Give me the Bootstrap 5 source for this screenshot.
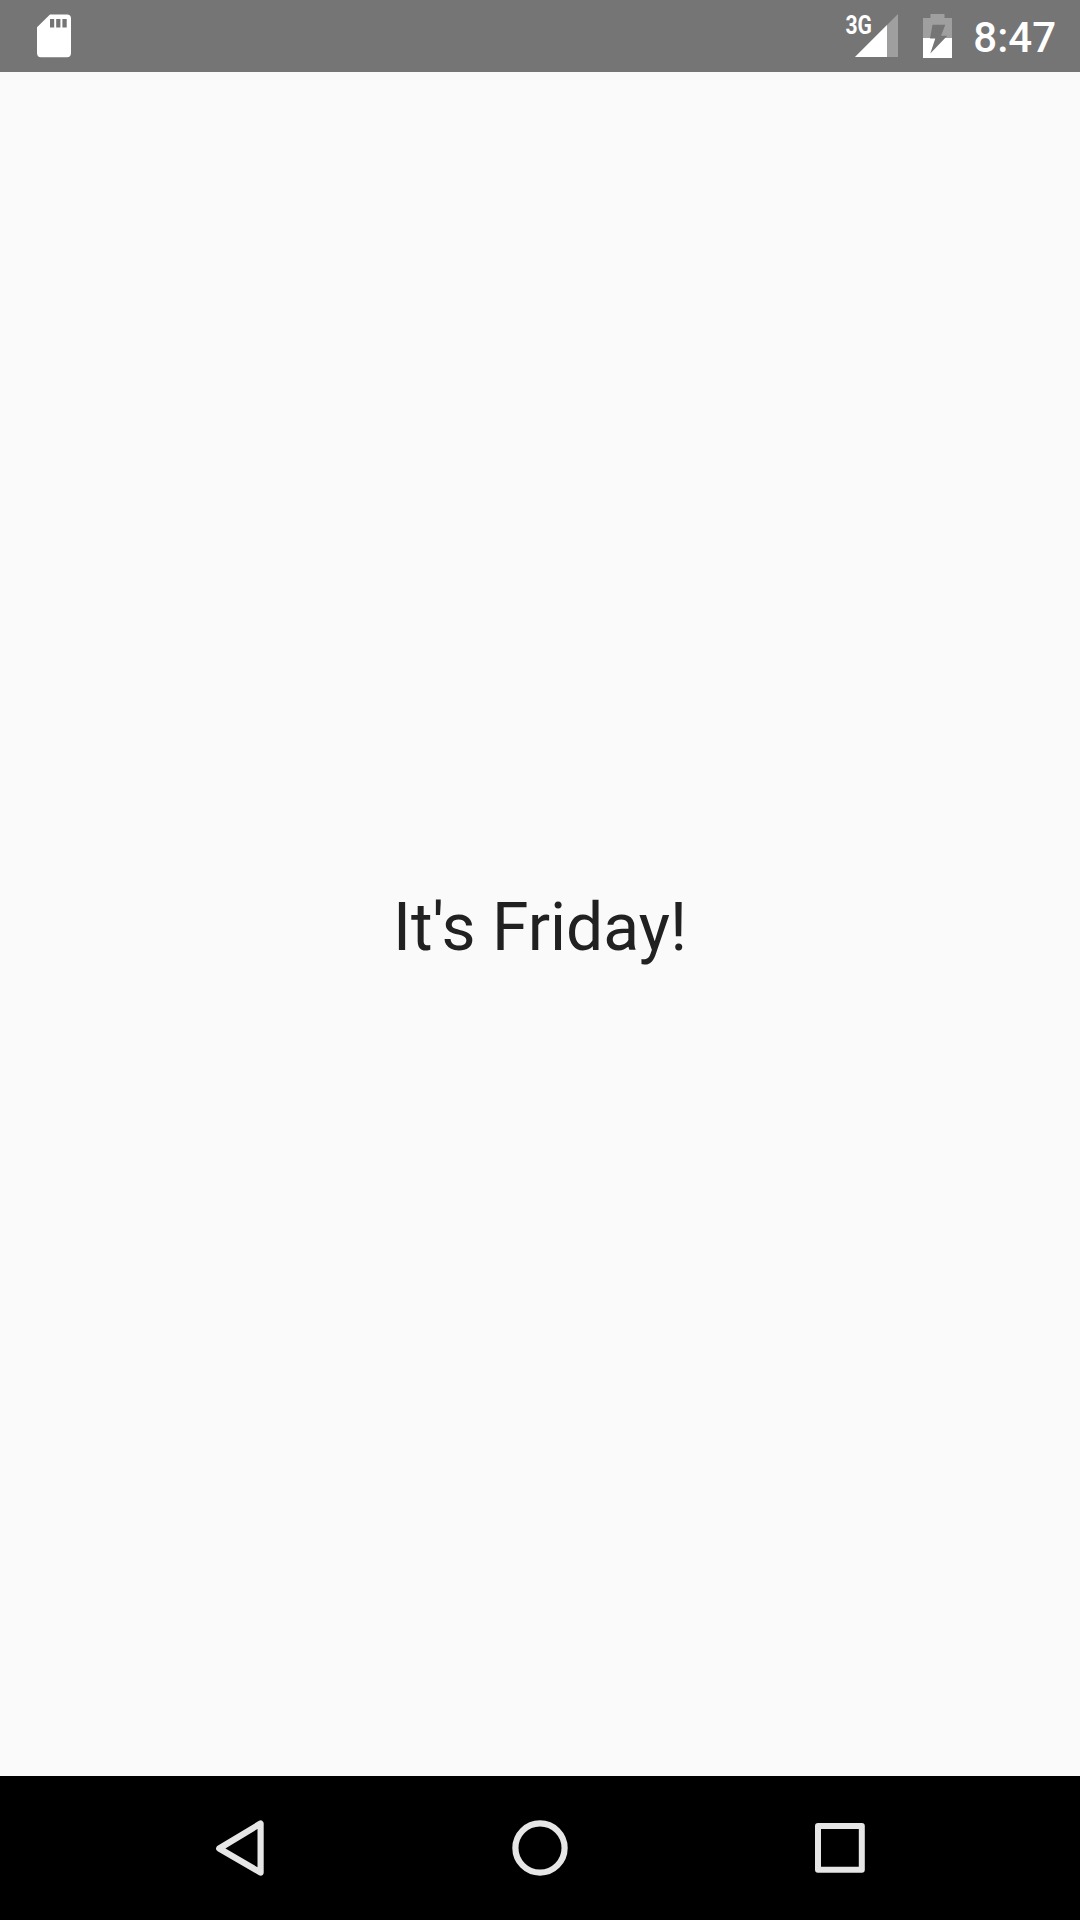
<!DOCTYPE html>
<html lang="en">
<head>
<meta charset="utf-8">
<meta name="viewport" content="width=device-width, initial-scale=1">
<title>It's Friday!</title>
<link href="https://cdn.jsdelivr.net/npm/bootstrap@5.3.0/dist/css/bootstrap.min.css" rel="stylesheet">
<style>
  body { font-family: Roboto, sans-serif; background: #fafafa; color: #212121; }
  .status-bar { height: 72px; background: #757575; color: #fff; padding: 0 24px 0 30px; }
  .status-bar svg, .system-nav svg { display: block; }
  .clock { font-size: 42px; font-weight: 500; line-height: 68px; padding-top: 4px; margin-left: 15px; }
  .greeting { font-size: 66px; line-height: 77px; padding-top: 7px; }
  .system-nav { height: 144px; background: #000; }
  .nav-slot { width: 300px; }
  .net-label { font: 700 26px Roboto, sans-serif; }
</style>
</head>
<body class="vh-100 d-flex flex-column overflow-hidden">
  <header class="status-bar d-flex align-items-center justify-content-between flex-shrink-0">
    <svg width="48" height="72" viewBox="30 0 48 72" aria-label="SD card">
      <path fill="#fff" fill-rule="evenodd" d="M50 14.5H67Q71 14.5 71 18.500V53Q71 57.200 67 57.200H41Q37 57.200 37 53V27.300ZM50 19V27.500H54.200V19ZM56.200 19V27.500H60.400V19ZM62.400 19V27.500H66.700V19Z"/>
    </svg>
    <div class="d-flex align-items-center">
      <svg width="60" height="72" viewBox="842 0 60 72" aria-label="3G signal">
        <path fill="#9f9f9f" d="M898 14V57H855Z"/>
        <path fill="#fff" d="M887 25V57H855Z"/>
        <text class="net-label" x="845.500" y="33.500" fill="#fff" textLength="26.500" lengthAdjust="spacingAndGlyphs">3G</text>
      </svg>
      <svg width="56" height="72" viewBox="902 0 56 72" aria-label="Battery charging">
        <path fill="#9f9f9f" d="M930.500 14H944.500V18H952V38H923V18H930.500Z"/>
        <path fill="#fff" d="M923 38H952V58H923Z"/>
        <path fill="#757575" d="M932.500 24.700H945.300L941 35.800H947.300L930.300 53.500L935.300 38.500H930Z"/>
      </svg>
      <span class="clock">8:47</span>
    </div>
  </header>
  <main class="flex-grow-1 d-flex align-items-center justify-content-center">
    <div class="greeting">It's Friday!</div>
  </main>
  <nav class="system-nav d-flex align-items-center justify-content-center flex-shrink-0">
    <div class="nav-slot d-flex justify-content-center">
      <svg width="60" height="60" viewBox="0 0 60 60" fill="none" stroke="#e6e6e6" stroke-width="6.200" stroke-linejoin="round" aria-label="Back"><path d="M9.200 30.500L50.600 5.500V54.600Z"/></svg>
    </div>
    <div class="nav-slot d-flex justify-content-center">
      <svg width="60" height="60" viewBox="0 0 60 60" fill="none" stroke="#e6e6e6" stroke-width="6.200" aria-label="Home"><circle cx="30" cy="30" r="24.600"/></svg>
    </div>
    <div class="nav-slot d-flex justify-content-center">
      <svg width="60" height="60" viewBox="0 0 60 60" fill="none" stroke="#e6e6e6" stroke-width="6" stroke-linejoin="round" aria-label="Recent apps"><path d="M8 8H51.800V51.800H8Z"/></svg>
    </div>
  </nav>
<script src="https://cdn.jsdelivr.net/npm/bootstrap@5.3.0/dist/js/bootstrap.bundle.min.js"></script>
</body>
</html>
